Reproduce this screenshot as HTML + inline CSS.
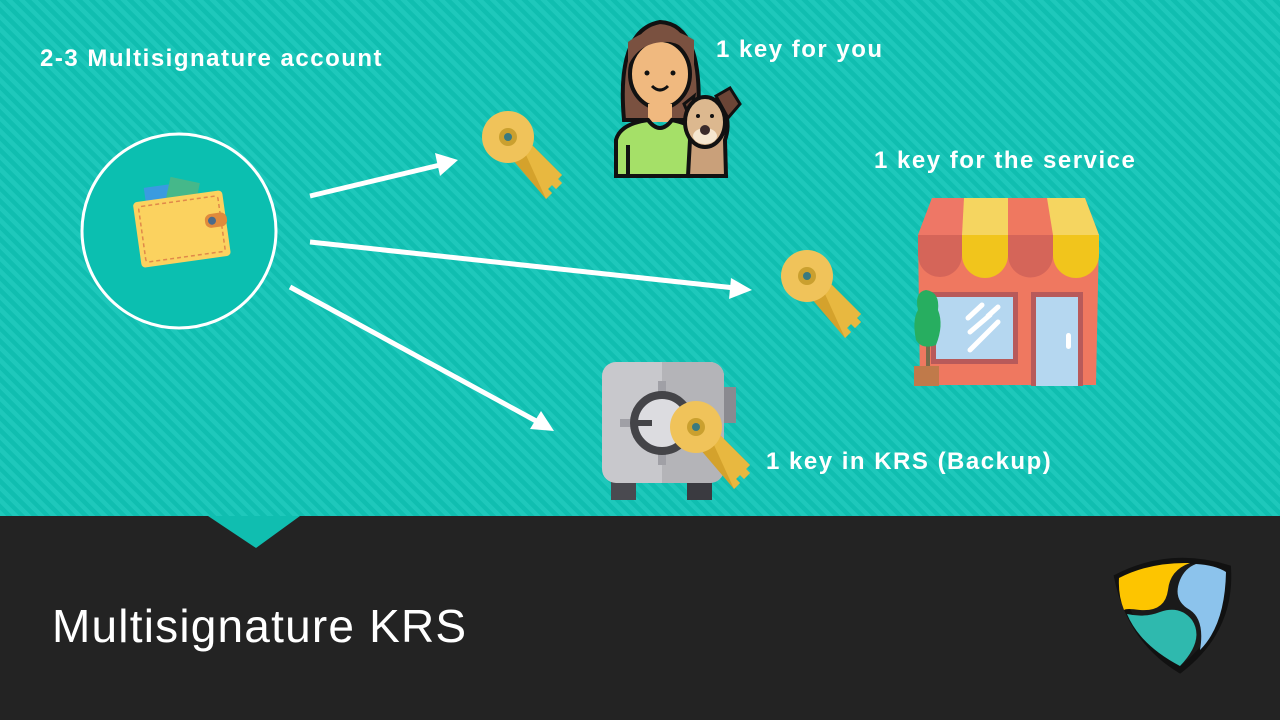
<!DOCTYPE html>
<html><head><meta charset="utf-8"><style>
html,body{margin:0;padding:0;width:1280px;height:720px;overflow:hidden;font-family:"Liberation Sans",sans-serif}
.top{position:absolute;left:0;top:0;width:1280px;height:516px;background:repeating-linear-gradient(45deg,#1ec8bb 0 4.5px,#10beb0 4.5px 9px)}
.bot{position:absolute;left:0;top:516px;width:1280px;height:204px;background:#232323}
.t{position:absolute;color:#fff;font-weight:bold;font-size:24px;letter-spacing:1.5px;white-space:nowrap}
</style></head><body>
<div class="top"></div>
<div class="bot"></div>
<svg width="1280" height="720" style="position:absolute;left:0;top:0">
<defs>
<g id="key">
<path d="M14 30 L30 14 L76 60 L72 64 L76 68 L70 74 L66 70 L62 74 L66 78 L60 84 Z" fill="#d4a22c"/>
<path d="M30 14 L76 60 L72 64 L76 68 L70 74 L66 70 L62 74 L66 78 L60 84 L40 40Z" fill="#e8b840"/>
<circle cx="22" cy="22" r="26" fill="#f0c35a"/>
<circle cx="22" cy="22" r="9" fill="#caa02f"/>
<circle cx="22" cy="22" r="4" fill="#3a7a80"/>
</g>
</defs>
<polygon points="208,516 300,516 256,548" fill="#10beb0"/>
<circle cx="179" cy="231" r="97" fill="#0bbfb0" stroke="#fff" stroke-width="3"/>
<g transform="rotate(-8 182 230)">
<rect x="150" y="183" width="30" height="30" fill="#3a9be0"/>
<rect x="172" y="180" width="30" height="30" fill="#45b88a" transform="rotate(20 187 195)"/>
<rect x="137" y="196" width="90" height="66" rx="4" fill="#fbd25f"/>
<rect x="142" y="201" width="80" height="56" rx="3" fill="none" stroke="#e0894a" stroke-width="1.5" stroke-dasharray="4 3"/>
<rect x="206" y="218" width="22" height="14" rx="6" fill="#e08a3c"/>
<circle cx="213" cy="225" r="4" fill="#4a6b8a"/>
</g>
<g stroke="#fff" stroke-width="5" fill="#fff">
<line x1="310" y1="196" x2="440" y2="165"/>
<line x1="310" y1="242" x2="735" y2="288"/>
<line x1="290" y1="287" x2="538" y2="422"/>
</g>
<polygon points="458,160 435,153 440,176" fill="#fff"/>
<polygon points="752,290 731,278 729,299" fill="#fff"/>
<polygon points="554,431 541,411 530,429" fill="#fff"/>
<use href="#key" x="486" y="115"/>
<use href="#key" x="785" y="254"/>
<!-- person -->
<path d="M624 120 Q616 30 660 22 Q704 24 698 120 Z" fill="#7a5140" stroke="#111" stroke-width="4"/>
<ellipse cx="660" cy="74" rx="30" ry="34" fill="#f0b97f" stroke="#111" stroke-width="4"/>
<path d="M628 66 Q640 40 670 42 Q690 46 694 66 L694 40 Q660 18 628 42Z" fill="#7a5140"/>
<rect x="648" y="104" width="24" height="18" fill="#f0b97f"/>
<path d="M616 176 L616 140 Q620 124 648 120 Q660 136 672 120 Q700 126 705 140 L705 176Z" fill="#a5e068" stroke="#111" stroke-width="4"/>
<line x1="628" y1="145" x2="628" y2="176" stroke="#111" stroke-width="4"/>
<circle cx="647" cy="73" r="2.5" fill="#111"/><circle cx="673" cy="73" r="2.5" fill="#111"/>
<path d="M652 86 Q660 94 668 86" stroke="#111" stroke-width="3" fill="none"/>
<!-- dog -->
<path d="M688 176 L690 140 Q685 120 700 100 L720 100 Q732 120 725 140 L726 176Z" fill="#c9a07a" stroke="#111" stroke-width="4"/>
<path d="M716 96 L730 88 L740 104 L728 118Z" fill="#6b4536" stroke="#111" stroke-width="3"/>
<path d="M694 96 L684 104 L690 118Z" fill="#6b4536" stroke="#111" stroke-width="3"/>
<ellipse cx="705" cy="122" rx="20" ry="25" fill="#dcb88f" stroke="#111" stroke-width="4"/>
<ellipse cx="705" cy="136" rx="12" ry="8" fill="#f5e6cf"/>
<circle cx="705" cy="130" r="5" fill="#3a2a2a"/>
<circle cx="698" cy="116" r="2" fill="#111"/><circle cx="712" cy="116" r="2" fill="#111"/>
<!-- store -->
<path d="M918 235 L932 198 L1085 198 L1099 235 L1096 385 L920 385Z" fill="#ef7860"/>
<path d="M932 198 L964 198 L962 235 L918 235Z" fill="#ee7766"/>
<path d="M964 198 L1008 198 L1008 235 L962 235Z" fill="#f5d560"/>
<path d="M1047 198 L1085 198 L1099 235 L1053 235Z" fill="#f5d560"/>
<path d="M918 235 h44 v20 a22 22 0 0 1 -44 0Z" fill="#d56559"/>
<path d="M962 235 h46 v20 a23 23 0 0 1 -46 0Z" fill="#f1c51c"/>
<path d="M1008 235 h45 v20 a22 22 0 0 1 -45 0Z" fill="#d56559"/>
<path d="M1053 235 h46 v20 a23 23 0 0 1 -46 0Z" fill="#f1c51c"/>
<rect x="931" y="292" width="87" height="72" fill="#b85a5a"/>
<rect x="936" y="297" width="77" height="62" fill="#b5d7f0"/>
<rect x="1031" y="292" width="52" height="94" fill="#b85a5a"/>
<rect x="1036" y="297" width="42" height="89" fill="#b5d7f0"/>
<rect x="1066" y="333" width="5" height="16" rx="2.5" fill="#fff"/>
<g stroke="#fff" stroke-width="5" stroke-linecap="round"><line x1="968" y1="318" x2="982" y2="305"/><line x1="988" y1="316" x2="998" y2="307"/><line x1="970" y1="332" x2="990" y2="315"/><line x1="970" y1="350" x2="998" y2="322"/></g>
<rect x="926" y="340" width="4" height="30" fill="#7a6a4a"/>
<path d="M926 290 Q940 292 938 310 Q944 325 936 345 Q922 350 916 340 Q912 320 918 310 Q914 292 926 290Z" fill="#27ae60"/>
<rect x="914" y="366" width="25" height="20" fill="#c07a4a"/>
<!-- safe -->
<rect x="724" y="387" width="12" height="36" fill="#8a8a90"/>
<rect x="611" y="480" width="25" height="20" fill="#4a4a50"/>
<rect x="687" y="480" width="25" height="20" fill="#3a3a40"/>
<rect x="602" y="362" width="122" height="121" rx="14" fill="#c8c8cc"/>
<path d="M662 362 h48 a14 14 0 0 1 14 14 v93 a14 14 0 0 1 -14 14 h-48Z" fill="#b4b4b8"/>
<circle cx="662" cy="423" r="32" fill="#dcdce0"/>
<g stroke="#a0a0a6" stroke-width="8"><line x1="662" y1="381" x2="662" y2="465"/><line x1="620" y1="423" x2="704" y2="423"/></g>
<circle cx="662" cy="423" r="28" fill="#dcdce0" stroke="#444448" stroke-width="8"/>
<line x1="634" y1="423" x2="652" y2="423" stroke="#444448" stroke-width="6"/>
<use href="#key" x="674" y="405"/>
<!-- NEM logo -->
<path d="M1117 577 Q1170 550 1228 568 Q1232 630 1180 670 Q1130 640 1117 577Z" fill="#1a1a1a" stroke="#111" stroke-width="6"/>
<path d="M1119 578 Q1150 562 1190 563 Q1170 570 1168 590 Q1165 612 1140 610 Q1126 608 1124 610 Q1118 595 1119 578Z" fill="#fdc500"/>
<path d="M1196 564 Q1215 565 1226 572 Q1225 625 1200 650 Q1205 620 1190 610 Q1172 600 1180 580 Q1185 568 1196 564Z" fill="#8cc3ec"/>
<path d="M1127 614 Q1145 618 1160 612 Q1180 605 1192 620 Q1205 640 1180 666 Q1140 645 1127 614Z" fill="#2fb9ae"/>
</svg>
<div class="t" style="left:40px;top:45px">2-3 Multisignature account</div>
<div class="t" style="left:716px;top:36px">1 key for you</div>
<div class="t" style="left:874px;top:147px">1 key for the service</div>
<div class="t" style="left:766px;top:448px">1 key in KRS (Backup)</div>
<div style="position:absolute;left:52px;top:599px;color:#fff;font-size:46px;letter-spacing:1.2px;white-space:nowrap">Multisignature KRS</div>
</body></html>
